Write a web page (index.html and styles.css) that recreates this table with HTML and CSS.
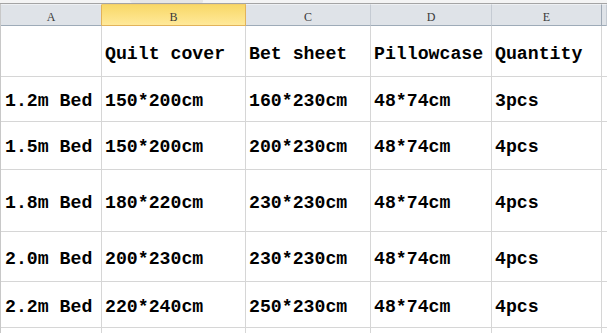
FILE: index.html
```html
<!DOCTYPE html>
<html>
<head>
<meta charset="utf-8">
<link rel="stylesheet" href="styles.css">
</head>
<body>
<div class="sheet">
  <div class="topstrip"><div class="tab"></div></div>
  <div class="grid">
    <div class="hd">A</div>
    <div class="hd sel">B</div>
    <div class="hd">C</div>
    <div class="hd">D</div>
    <div class="hd edge">E</div>
    <div class="hd last"></div>

    <div class="c r1 first"></div>
    <div class="c r1">Quilt cover</div>
    <div class="c r1">Bet sheet</div>
    <div class="c r1">Pillowcase</div>
    <div class="c r1">Quantity</div>
    <div class="c r1 last"></div>

    <div class="c r2 first">1.2m Bed</div>
    <div class="c r2">150*200cm</div>
    <div class="c r2">160*230cm</div>
    <div class="c r2">48*74cm</div>
    <div class="c r2">3pcs</div>
    <div class="c r2 last"></div>

    <div class="c r3 first">1.5m Bed</div>
    <div class="c r3">150*200cm</div>
    <div class="c r3">200*230cm</div>
    <div class="c r3">48*74cm</div>
    <div class="c r3">4pcs</div>
    <div class="c r3 last"></div>

    <div class="c r4 first">1.8m Bed</div>
    <div class="c r4">180*220cm</div>
    <div class="c r4">230*230cm</div>
    <div class="c r4">48*74cm</div>
    <div class="c r4">4pcs</div>
    <div class="c r4 last"></div>

    <div class="c r5 first">2.0m Bed</div>
    <div class="c r5">200*230cm</div>
    <div class="c r5">230*230cm</div>
    <div class="c r5">48*74cm</div>
    <div class="c r5">4pcs</div>
    <div class="c r5 last"></div>

    <div class="c r6 first">2.2m Bed</div>
    <div class="c r6">220*240cm</div>
    <div class="c r6">250*230cm</div>
    <div class="c r6">48*74cm</div>
    <div class="c r6">4pcs</div>
    <div class="c r6 last"></div>

    <div class="c r7"></div>
    <div class="c r7"></div>
    <div class="c r7"></div>
    <div class="c r7"></div>
    <div class="c r7"></div>
    <div class="c r7 last"></div>
  </div>
</div>
</body>
</html>
```
FILE: styles.css
```css
html, body {
  margin: 0;
  padding: 0;
  background: #ffffff;
  overflow: hidden;
}

.sheet {
  width: 607px;
  height: 333px;
  overflow: hidden;
  background: #ffffff;
}

.topstrip {
  height: 3px;
  background: #f4f4f4;
  border-bottom: 1px solid #a4a4a4;
  display: flex;
}

.tab {
  margin-left: 130px;
  width: 73px;
  height: 3px;
  background: #e6e6e6;
  border-bottom-left-radius: 4px;
  border-bottom-right-radius: 2px;
}

.grid {
  display: grid;
  grid-template-columns: 101px 144px 125px 121px 110px 1fr;
  grid-template-rows: 22px 51px 45px 48px 62px 50px 46px 20px;
  border-left: 1px solid #c8c8c8;
}

.hd {
  background: #dfe3e8;
  border-top: 1px solid #eef0f3;
  border-right: 1px solid #c5cbd3;
  border-bottom: 1px solid #9eabb8;
  font-family: "Liberation Serif", serif;
  font-size: 12px;
  color: #3a3a3a;
  display: flex;
  align-items: center;
  justify-content: center;
  padding-top: 4px;
  box-sizing: border-box;
}

.hd.sel {
  background: linear-gradient(#f8d868, #ffe99a);
  border-right: 1px solid #e2b35a;
  border-bottom: 1px solid #e2b35a;
  border-top: 1px solid #f4cf6a;
}

.hd:first-child {
  border-right: 1px solid #e2b35a;
}

.hd.edge {
  border-right: 1px solid #9ea8b4;
}

.c {
  border-right: 1px solid #d6d6d6;
  border-bottom: 1px solid #d6d6d6;
  font-family: "Liberation Mono", monospace;
  font-weight: bold;
  font-size: 18.2px;
  color: #000000;
  white-space: nowrap;
  overflow: hidden;
  display: flex;
  align-items: center;
  padding-left: 3px;
  box-sizing: border-box;
}

.c.first {
  padding-left: 4px;
}

.c.last {
  border-right: none;
}

.r1 { padding-top: 5px; }
.r2 { padding-top: 4px; }
.r3 { padding-top: 3px; }
.r4 { padding-top: 5px; }
.r5 { padding-top: 5px; }
.r6 { padding-top: 4px; }
```
